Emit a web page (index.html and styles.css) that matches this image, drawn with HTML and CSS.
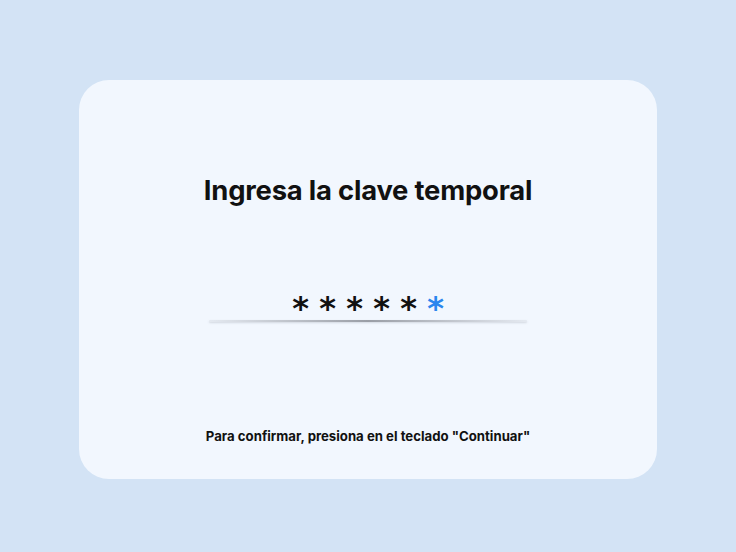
FILE: index.html
```html
<!DOCTYPE html>
<html lang="es">
<head>
<meta charset="utf-8">
<link rel="stylesheet" href="styles.css">
</head>
<body>
<div class="page">
  <div class="card">
    <h1 class="title">Ingresa la clave temporal</h1>
    <div class="code">
      <div class="stars"><span>*</span><span>*</span><span>*</span><span>*</span><span>*</span><span class="active">*</span></div>
      <div class="line"></div>
    </div>
    <p class="hint">Para confirmar, presiona en el teclado "Continuar"</p>
  </div>
</div>
</body>
</html>
```
FILE: styles.css
```css
html, body { margin: 0; padding: 0; }
body {
  width: 736px; height: 552px;
  background: #d3e3f5;
  font-family: "Inter", "Open Sans", sans-serif;
  overflow: hidden;
}
.page {
  display: flex;
  justify-content: center;
  padding-top: 80px;
}
.card {
  width: 578px;
  height: 399px;
  background: #f2f7fe;
  border-radius: 30px;
  display: flex;
  flex-direction: column;
  align-items: center;
  box-sizing: border-box;
  padding-top: 94px;
}
.title {
  margin: 0;
  font-size: 27.4px;
  font-weight: 700;
  color: #111;
  letter-spacing: -0.2px;
  line-height: 32px;
}
.code {
  margin-top: 81px;
  display: flex;
  flex-direction: column;
  align-items: center;
}
.stars {
  display: flex;
  gap: 9px;
  height: 26px;
}
.stars span {
  width: 18px;
  text-align: center;
  font-family: "DejaVu Sans", sans-serif;
  font-weight: 700;
  font-size: 32px;
  line-height: 42px;
  color: #111;
  height: 26px;
}
.stars .active { color: #2a86ee; }
.line {
  margin-top: 7px;
  width: 318px;
  height: 2px;
  background: linear-gradient(90deg, rgba(150,155,165,0.15), #9a9ea6 50%, rgba(150,155,165,0.15));
  box-shadow: 0 1px 2px rgba(120,125,135,0.25);
  border-radius: 2px;
}
.hint {
  margin: 106px 0 0 0;
  font-size: 13.2px;
  font-weight: 700;
  color: #111;
  line-height: 16px;
}
```
